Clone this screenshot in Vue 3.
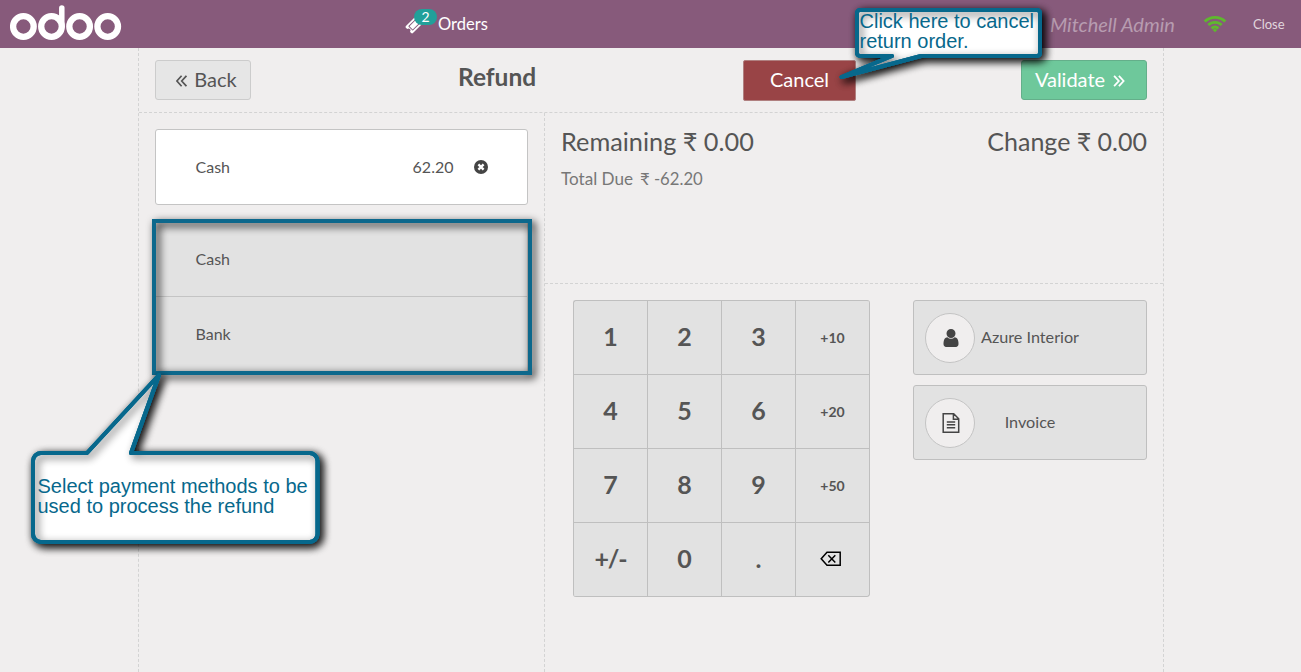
<script setup>
const keys = ['1', '2', '3', '+10', '4', '5', '6', '+20', '7', '8', '9', '+50', '+/-', '0', '.', 'back']
const methods = ['Cash', 'Bank']
const isMode = (k) => /^\+\d/.test(k)
</script>

<template>
  <div class="pos">
    <header class="topbar">
      <svg class="logo" width="112" height="36" viewBox="0 0 112 36" fill="none" stroke="#fff" stroke-width="6.3">
        <circle cx="13.4" cy="21.5" r="10.300" />
        <circle cx="41.5" cy="21.5" r="10.300" />
        <circle cx="69.6" cy="21.5" r="10.300" />
        <circle cx="97.7" cy="21.5" r="10.300" />
        <path d="M51.800 21.5V3" stroke-width="5.500" stroke-linecap="round" />
      </svg>
      <div class="orders">
        <span class="ticket">
          <svg width="18" height="18" viewBox="0 0 1792 1792" fill="#fff">
            <path d="M1024 452l316 316-572 572-316-316zm-211 979l618-618q19-19 19-45t-19-45l-362-362q-18-18-45-18t-45 18L361 979q-19 19-19 45t19 45l362 362q18 18 45 18t45-18zm889-637l-907 908q-37 37-90.5 37t-90.5-37l-126-126q56-56 56-136t-56-136-136-56-136 56L91 1178q-37-37-37-90.5T91 997L998 91q37-37 90.5-37t90.5 37l125 125q-56 56-56 136t56 136 136 56 136-56l126 125q37 37 37 90.5t-37 90.5z" />
          </svg>
          <span class="badge">2</span>
        </span>
        <span class="orders-label">Orders</span>
      </div>
      <span class="user">Mitchell Admin</span>
      <svg class="wifi" width="24" height="18" viewBox="0 0 24 18" fill="none" stroke="#5fb82e" stroke-width="2.8">
        <path d="M1.7 6.6a14.6 14.6 0 0 1 20.6 0" />
        <path d="M5.3 10.1a9.5 9.5 0 0 1 13.4 0" />
        <path d="M8.6 13.4a4.8 4.8 0 0 1 6.8 0" />
        <path d="M12 17.300l-2.300-2.300a3.300 3.300 0 0 1 4.600 0z" fill="#5fb82e" stroke="none" />
      </svg>
      <span class="close">Close</span>
    </header>

    <main class="screen">
      <div class="actions">
        <button class="btn back">
          <svg width="11" height="12" viewBox="0 0 11 12" fill="none" stroke="currentColor" stroke-width="1.7"><path d="M5.6.8L.9 6l4.7 5.2M10.4.8L5.7 6l4.7 5.2" /></svg>
          <span>Back</span>
        </button>
        <h1>Refund</h1>
        <button class="btn cancel">Cancel</button>
        <button class="btn validate">
          <span>Validate</span>
          <svg width="12" height="12" viewBox="0 0 11 12" fill="none" stroke="currentColor" stroke-width="1.8"><path d="M.6.8L5.3 6 .6 11.2M5.4.8L10.1 6l-4.7 5.2" /></svg>
        </button>
      </div>

      <div class="body">
        <section class="left">
          <div class="line">
            <span>Cash</span>
            <span class="amount">62.20</span>
            <svg width="14" height="14" viewBox="0 0 14 14"><circle cx="7" cy="7" r="7" fill="#444" /><path d="M4.4 4.4l5.2 5.2M9.6 4.4L4.4 9.6" stroke="#fff" stroke-width="2.3" /></svg>
          </div>
          <div class="methods">
            <div v-for="m in methods" :key="m" class="method">{{ m }}</div>
          </div>
        </section>

        <section class="right">
          <div class="status">
            <div>
              <div class="big remaining">Remaining ₹ 0.00</div>
              <div class="due"><span>Total Due</span><span class="sum">₹ -62.20</span></div>
            </div>
            <div class="big">Change ₹ 0.00</div>
          </div>
          <div class="controls">
            <div class="numpad">
              <button v-for="k in keys" :key="k" class="key" :class="{ mode: isMode(k), sign: k === '+/-' }">
                <svg v-if="k === 'back'" class="erase" width="22" height="16" viewBox="0 0 22 16" fill="none" stroke="#000" stroke-width="1.5"><path d="M7 1.3h13.2v13H7L1.2 7.8zM8.300 4.2l7 7.200M15.300 4.2l-7 7.200" /></svg>
                <template v-else>{{ k }}</template>
              </button>
            </div>
            <div class="options">
              <button class="option">
                <span class="disc">
                  <svg width="16" height="18" viewBox="0 0 1280 1536" fill="#444"><path d="M1280 1271q0 109-62.500 187t-150.500 78h-854q-88 0-150.500-78t-62.500-187q0-85 8.500-160.500t31.500-152 58.500-131 94-89 134.500-34.500q131 128 313 128t313-128q76 0 134.500 34.500t94 89 58.500 131 31.500 152 8.500 160.500zm-256-887q0 159-112.500 271.500t-271.500 112.500-271.500-112.500-112.500-271.500 112.500-271.500 271.500-112.500 271.500 112.500 112.500 271.500z" /></svg>
                </span>
                <span class="label">Azure Interior</span>
              </button>
              <button class="option">
                <span class="disc">
                  <svg width="18" height="20" viewBox="0 0 18 20" fill="none" stroke="#444" stroke-width="1.5"><path d="M1.200.8h10.500l5 5v13.400h-15.500zM11.400.8v5.400h5.300M4.800 8.900h8.400M4.800 11.800h8.400M4.800 14.700h8.400" /></svg>
                </span>
                <span class="label">Invoice</span>
              </button>
            </div>
          </div>
        </section>
      </div>
    </main>

    <svg class="notes" width="1301" height="672" viewBox="0 0 1301 672">
      <defs>
        <filter id="shade" x="-20%" y="-30%" width="140%" height="160%">
          <feDropShadow dx="3" dy="3" stdDeviation="4.300" flood-color="#000" flood-opacity="1" />
        </filter>
      </defs>
      <g fill="none" stroke="#07688c" stroke-width="4" stroke-linejoin="round">
        <rect x="154" y="221" width="376" height="152" stroke-linejoin="miter" filter="url(#shade)" />
        <path class="paper" filter="url(#shade)" d="M41 453H87L159 375L131 453H309.500a8 8 0 0 1 8 8V534a8 8 0 0 1-8 8H41a8 8 0 0 1-8-8V461a8 8 0 0 1 8-8z" />
        <path filter="url(#shade)" d="M41 453H87L159 375L131 453H309.500a8 8 0 0 1 8 8V534a8 8 0 0 1-8 8H41a8 8 0 0 1-8-8V461a8 8 0 0 1 8-8z" opacity="0.6" />
        <path d="M41 453H87L159 375L131 453H309.500a8 8 0 0 1 8 8V534a8 8 0 0 1-8 8H41a8 8 0 0 1-8-8V461a8 8 0 0 1 8-8z" />
        <path class="paper" filter="url(#shade)" d="M860 10H1037a3 3 0 0 1 3 3V53a3 3 0 0 1-3 3H921L841.500 77L892 56H860a3 3 0 0 1-3-3V13a3 3 0 0 1 3-3z" />
        <path filter="url(#shade)" d="M860 10H1037a3 3 0 0 1 3 3V53a3 3 0 0 1-3 3H921L841.500 77L892 56H860a3 3 0 0 1-3-3V13a3 3 0 0 1 3-3z" opacity="0.6" />
        <path d="M860 10H1037a3 3 0 0 1 3 3V53a3 3 0 0 1-3 3H921L841.500 77L892 56H860a3 3 0 0 1-3-3V13a3 3 0 0 1 3-3z" />
      </g>
    </svg>
    <p class="note note-pay">Select payment methods to be<br />used to process the refund</p>
    <p class="note note-cancel">Click here to cancel<br />return order.</p>
  </div>
</template>

<style>
body { margin: 0; overflow: hidden; }
</style>

<style scoped>
.pos { position: relative; width: 1301px; height: 672px; overflow: hidden; display: flex; flex-direction: column; background: #f0eeee; color: #555; font-family: Lato, "Liberation Sans", sans-serif; font-size: 16px; white-space: nowrap; }
.pos * { box-sizing: border-box; }
svg { display: block; flex: none; }
button { font: inherit; color: inherit; padding: 0; margin: 0; border: 0; background: none; }
.topbar { height: 48px; flex: none; background: #875a7b; display: flex; align-items: center; color: #fff; }
.logo { margin: -3px 0 0 10px; }
.orders { margin-left: 283px; display: flex; align-items: center; width: 83px; }
.orders-label { font-size: 16.500px; }
.ticket { position: relative; width: 33px; padding-top: 1px; }
.badge { position: absolute; left: 9px; top: -6px; width: 23px; height: 16px; border-radius: 8px; background: #21a09a; font-size: 14px; line-height: 15px; text-align: center; }
.user { margin-left: 562px; width: 154px; font-size: 20px; font-style: italic; color: #b79cb0; }
.wifi { margin-left: -1px; }
.close { margin-left: 26px; font-size: 13px; color: #e1d6de; }
.screen { flex: 1; width: 1026px; margin-left: 138px; border: dashed #d3d3d3; border-width: 0 1px; display: flex; flex-direction: column; }
.actions { height: 65px; flex: none; border-bottom: 1px dashed #d3d3d3; padding: 12px 16px; display: flex; align-items: flex-start; }
.btn { height: 40px; border-radius: 3px; font-size: 20px; display: flex; align-items: center; justify-content: center; padding-bottom: 2px; }
.btn svg { margin-top: 3px; }
.back { width: 96px; border: 1px solid #ccc; background: #e6e6e6; gap: 7px; padding-left: 7px; }
h1 { margin: 1px 0 0 207px; width: 285px; font-size: 24.500px; line-height: 32px; font-weight: 700; }
.cancel { width: 113px; height: 41px; padding-bottom: 4px; background: #994446; border: 1px solid #b08080; color: #fff; border-radius: 2px; }
.validate { margin-left: auto; width: 126px; background: #6ec89b; border: 1px solid #64af8a; color: #fff; gap: 8px; padding-right: 8px; }
.body { flex: 1; display: flex; }
.left { width: 406px; border-right: 1px dashed #d3d3d3; padding: 16px; }
.line { width: 373px; height: 76px; background: #fff; border: 1px solid #c4c4c4; border-radius: 3px; padding: 0 39.500px; display: flex; align-items: center; }
.line span { padding-bottom: 2px; }
.line .amount { margin-left: auto; margin-right: 20px; }
.methods { margin-top: 15px; width: 373px; background: #e2e2e2; border: 1px solid #c4c4c4; }
.method { height: 75px; padding-left: 39.500px; line-height: 75px; }
.method + .method { border-top: 1px solid #c4c4c4; line-height: 73px; }
.right { flex: 1; display: flex; flex-direction: column; }
.status { height: 171px; border-bottom: 1px dashed #d3d3d3; padding: 12px 16px 0; display: flex; justify-content: space-between; }
.big { font-size: 25px; line-height: 32px; }
.remaining { font-size: 25.300px; }
.due { margin-top: 11px; font-size: 17.100px; line-height: 22px; color: #777; display: flex; gap: 7px; }
.sum { font-size: 16.700px; }
.controls { padding: 16px 16px 0 28px; display: flex; justify-content: space-between; align-items: flex-start; }
.numpad { width: 297px; display: grid; grid-template-columns: repeat(4, 74px); grid-auto-rows: 74px; border: solid #bfbfbf; border-width: 1px 0 0 1px; border-radius: 3px; overflow: hidden; background: #e2e2e2; }
.key { border: solid #bfbfbf; border-width: 0 1px 1px 0; font-size: 25px; font-weight: 700; display: flex; align-items: center; justify-content: center; padding-bottom: 3px; }
.key.sign { letter-spacing: -1.200px; }
.key.mode { font-size: 14px; padding-bottom: 0; }
.erase { margin: 1px 3px 0 0; }
.key:last-child { border-bottom-right-radius: 3px; }
.options { width: 234px; display: grid; gap: 10px; }
.option { height: 75px; border: 1px solid #bfbfbf; border-radius: 3px; background: #e2e2e2; display: flex; align-items: center; padding-left: 11px; }
.disc { width: 50px; height: 50px; flex: none; border: 1px solid #c4c4c4; border-radius: 50%; background: #f0eeee; display: flex; align-items: center; justify-content: center; padding-left: 1px; }
.label { width: 110px; text-align: center; padding-bottom: 2px; font-size: 16.200px; }
.notes { position: absolute; left: 0; top: 0; }
.paper { fill: #fff; }
.note { position: absolute; margin: 0; font-family: "Liberation Sans", Arial, sans-serif; font-size: 20px; line-height: 20px; color: #07688c; }
.note-pay { left: 37.500px; top: 476px; }
.note-cancel { left: 859.500px; top: 11px; }
</style>
